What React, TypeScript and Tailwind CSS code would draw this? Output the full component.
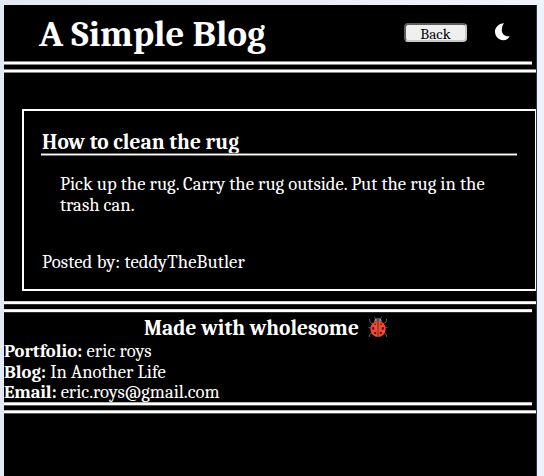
import React from "react";

type RuleProps = { short?: boolean; edge: string };

function Rule({ short, edge }: RuleProps) {
  return (
    <div className={`h-1 shrink-0 border-y bg-white ${edge} ${short ? "mr-1" : ""}`} />
  );
}

function Moon() {
  return (
    <svg viewBox="0 0 15 18" className="h-[18px] w-[15px]" aria-label="Dark mode">
      <path
        d="M9 0.3 C3.8 0.5 0 4.3 0 8.8 C0 13.6 3.8 17.3 8.3 17.3 C11.2 17.3 13.4 15.6 14.6 13.2 C10.4 13.8 6.8 11.2 6.8 7.2 C6.8 4.4 7.6 2 9 0.3 Z"
        fill="#fff"
      />
    </svg>
  );
}

function Ladybug() {
  return (
    <svg viewBox="0 0 20 22" className="h-[22px] w-5" aria-label="ladybug">
      <g fill="none" stroke="#62666b" strokeWidth="0.9">
        <path d="M7.5 3 L6.6 0.7 M12.5 3 L13.4 0.7" />
        <path d="M4.5 8 L2 6 L1.4 3 M15.5 8 L18 6 L18.6 3" />
        <path d="M3.5 12 L0.5 11.5 M16.5 12 L19.5 11.5" />
        <path d="M4.5 16.5 L2 18 L1.2 21 M15.5 16.5 L18 18 L18.8 21" />
      </g>
      <path d="M6 6 C6 3 7.8 1.8 10 1.8 C12.2 1.8 14 3 14 6 Z" fill="#4d5056" />
      <circle cx="7.8" cy="4" r="0.8" fill="#c9cdd1" />
      <circle cx="12.2" cy="4" r="0.8" fill="#c9cdd1" />
      <ellipse cx="10" cy="13" rx="7.6" ry="8" fill="#ff452b" />
      <path d="M10 5 V21" stroke="#54403d" strokeWidth="1.2" />
      <g fill="#3b1b19">
        <ellipse cx="7" cy="8.2" rx="0.9" ry="0.8" />
        <ellipse cx="13" cy="8.2" rx="0.9" ry="0.8" />
        <ellipse cx="5.2" cy="12.5" rx="1.2" ry="1.4" />
        <ellipse cx="14.8" cy="12.5" rx="1.2" ry="1.4" />
        <ellipse cx="7.2" cy="17" rx="1.1" ry="1.2" />
        <ellipse cx="12.8" cy="17" rx="1.1" ry="1.2" />
      </g>
    </svg>
  );
}

export default function App() {
  return (
    <div className="flex h-[476px] w-[544px] bg-[linear-gradient(to_right,#e3eaf4,#eff2f9)] pt-[5px] pl-1 font-['Cambria','Noto_Serif','DejaVu_Serif_Condensed','DejaVu_Serif',serif] text-white">
      <div className="flex w-[533px] flex-col border-r border-[#26344f] bg-black">
        <header className="flex h-14 shrink-0 items-start">
          <h1 className="mt-[7px] ml-[35px] w-[365px] text-[36.9px] leading-[44px] font-bold whitespace-nowrap">
            A Simple Blog
          </h1>
          <button className="mt-[18px] h-[19px] w-[63px] rounded-[4px] border-2 border-[#5c5c5c] border-r-[#c8c8c8] border-b-[#c8c8c8] bg-[#efefef] text-[15.2px] leading-[18px] text-black">
            Back
          </button>
          <div className="mt-[18px] ml-[28px]">
            <Moon />
          </div>
        </header>
        <Rule short edge="border-[#8a8585]" />
        <div className="h-1 shrink-0" />
        <Rule edge="border-[#8a8585]" />

        <main className="mt-9 ml-[18px] flex h-[182px] shrink-0 flex-col border-2 border-r border-white px-[17px]">
          <h2 className="mt-[17px] ml-px h-[25px] text-[21.4px] leading-[28px] font-bold whitespace-nowrap">
            How to clean the rug
          </h2>
          <div className="h-[3px] w-[476px] border-y border-[#77746e] bg-white" />
          <p className="mt-[18px] ml-[19px] text-[18.65px] leading-[21px] whitespace-nowrap">
            Pick up the rug. Carry the rug outside. Put the rug in the
            <br />
            trash can.
          </p>
          <p className="mt-9 ml-px text-[18.65px] leading-[21px] tracking-[0.13px] whitespace-nowrap">
            Posted by: teddyTheButler
          </p>
        </main>

        <footer className="mt-[10px] flex flex-col">
          <Rule edge="border-t-[#d0c8ca] border-b-[#2e2e2e]" />
          <div className="h-1" />
          <Rule short edge="border-t-[#d5d8de] border-b-[#2e2e2e]" />
          <div className="flex h-7 pl-[140px]">
            <h3 className="mt-[1px] w-[224px] text-[21.4px] leading-[28px] font-bold whitespace-nowrap">
              Made with wholesome
            </h3>
            <div className="mt-[3px]">
              <Ladybug />
            </div>
          </div>
          <ul className="h-[61px] text-[18.6px] leading-[20.5px] whitespace-nowrap">
            <li><b>Portfolio:</b> <span className="tracking-[0.1px]">eric roys</span></li>
            <li><b>Blog:</b> <span>In Another Life</span></li>
            <li><b className="tracking-[-0.15px]">Email:</b> <span>eric.roys@gmail.com</span></li>
          </ul>
          <Rule short edge="border-t-[#b8b8b8] border-b-[#555a58]" />
          <div className="h-1" />
          <Rule edge="border-t-[#b8b8b8] border-b-[#555a58]" />
        </footer>
      </div>
    </div>
  );
}
